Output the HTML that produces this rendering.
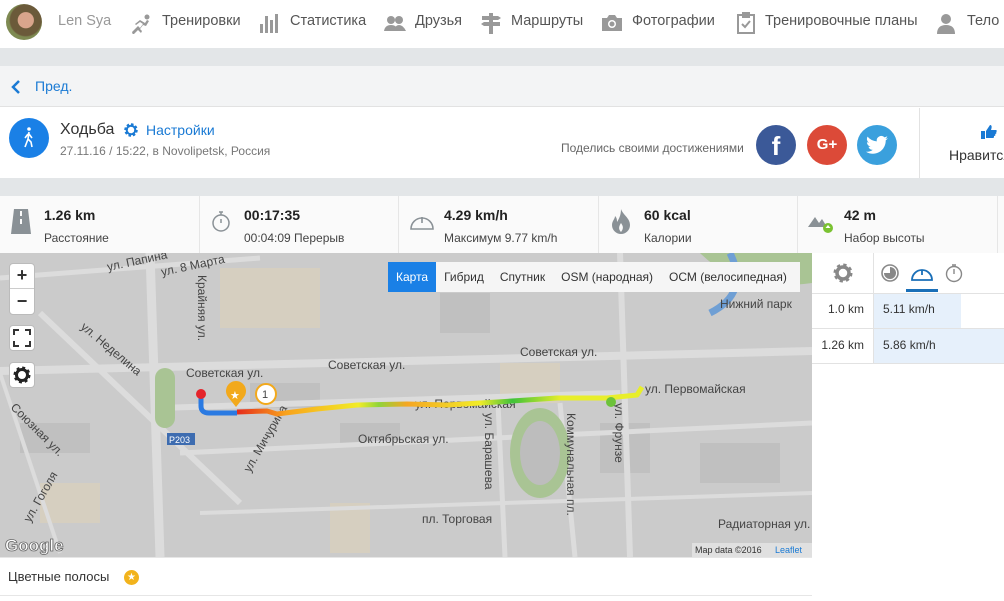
<!DOCTYPE html>
<html><head><meta charset="utf-8"><style>
*{margin:0;padding:0;box-sizing:border-box}
body{width:1004px;height:601px;overflow:hidden;font-family:"Liberation Sans",sans-serif;background:#fff;position:relative;color:#333}
.a{position:absolute}
.nav{font-size:14.5px;color:#555;top:13px}
.navi{top:12px;width:22px;height:22px}
.st b{font-size:14px;color:#222;display:block}
.st span{font-size:12px;color:#444;display:block;margin-top:8px}
</style></head><body>
<!-- top nav -->
<div class="a" style="left:6px;top:4px;width:36px;height:36px;border-radius:50%;background:radial-gradient(circle at 55% 45%,#d9a58c 0 28%,#6b5a3a 30% 55%,#7e8a52 60%)"></div>
<div class="a nav" style="left:58px;color:#999">Len Sya</div>
<svg class="a navi" style="left:130px" viewBox="0 0 22 22" fill="#999"><circle cx="17" cy="5" r="2.5"/><path d="M2 20l6-6 2 2 3-4-3-2-4 3-1-1 5-4 5 3 2-3 2 1-3 5-3-1-3 4 2 2-1 2-3-3-5 5z"/></svg>
<div class="a nav" style="left:162px">Тренировки</div>
<svg class="a navi" style="left:258px" viewBox="0 0 22 22" fill="#999"><rect x="2" y="12" width="3" height="9"/><rect x="7" y="4" width="3" height="17"/><rect x="12" y="8" width="3" height="13"/><rect x="17" y="2" width="3" height="19"/></svg>
<div class="a nav" style="left:290px">Статистика</div>
<svg class="a navi" style="left:384px" viewBox="0 0 22 22" fill="#999"><circle cx="7" cy="8" r="4"/><circle cx="15" cy="8" r="4"/><path d="M0 19q1-6 7-6t7 6zM10 19q1-6 5-6t7 6z"/></svg>
<div class="a nav" style="left:415px">Друзья</div>
<svg class="a navi" style="left:480px" viewBox="0 0 22 22" fill="#999"><rect x="9" y="1" width="4" height="21"/><path d="M2 4h16l3 2-3 2H2zM4 10h16v4H4l-3-2z"/></svg>
<div class="a nav" style="left:511px">Маршруты</div>
<svg class="a navi" style="left:601px" viewBox="0 0 22 22" fill="#999"><path d="M1 6h5l2-3h6l2 3h5v13H1z"/><circle cx="11" cy="12" r="4" fill="#fff"/><circle cx="11" cy="12" r="2.5"/></svg>
<div class="a nav" style="left:632px">Фотографии</div>
<svg class="a navi" style="left:735px" viewBox="0 0 22 22" fill="none" stroke="#999" stroke-width="2"><rect x="3" y="3" width="16" height="18"/><path d="M7 12l3 3 5-6"/><rect x="8" y="1" width="6" height="4" fill="#999"/></svg>
<div class="a nav" style="left:765px">Тренировочные планы</div>
<svg class="a navi" style="left:935px" viewBox="0 0 22 22" fill="#999"><circle cx="11" cy="7" r="5"/><path d="M2 22q0-9 9-9t9 9z"/></svg>
<div class="a nav" style="left:967px">Тело</div>
<!-- bands -->
<div class="a" style="top:48px;left:0;width:1004px;height:18px;background:#e3e6e8"></div>
<div class="a" style="top:66px;left:0;width:1004px;height:41px;background:#f3f4f5;border-bottom:1px solid #e2e2e2"></div>
<svg class="a" style="left:10px;top:79px" width="12" height="16" viewBox="0 0 12 16"><path d="M9 2L3 8l6 6" stroke="#1a7ad4" stroke-width="2.5" fill="none"/></svg>
<div class="a" style="left:35px;top:78px;font-size:14px;color:#1a7ad4">Пред.</div>
<!-- card -->
<div class="a" style="left:9px;top:118px;width:40px;height:40px;border-radius:50%;background:#1a80e6"></div>
<svg class="a" style="left:20px;top:126px" width="18" height="24" viewBox="0 0 18 24" fill="none" stroke="#fff" stroke-width="1.6"><circle cx="9" cy="3" r="1.8" fill="#fff" stroke="none"/><path d="M9 6l-1 7-3 8M8 13l3 3 1 5M9 8l3 4M8 8l-3 4"/></svg>
<div class="a" style="left:60px;top:121px;font-size:16px;color:#333">Ходьба</div>
<svg class="a" style="left:123px;top:122px" width="16" height="16" viewBox="0 0 16 16"><circle cx="8" cy="8" r="5" fill="none" stroke="#1a7ad4" stroke-width="3.5" stroke-dasharray="2.2 1.7"/><circle cx="8" cy="8" r="4.3" fill="none" stroke="#1a7ad4" stroke-width="2"/></svg>
<div class="a" style="left:146px;top:122px;font-size:14px;color:#1a7ad4">Настройки</div>
<div class="a" style="left:60px;top:144px;font-size:12px;color:#777">27.11.16 / 15:22, в Novolipetsk, Россия</div>
<div class="a" style="left:561px;top:141px;font-size:12px;color:#666">Поделись своими достижениями</div>
<div class="a" style="left:756px;top:125px;width:40px;height:40px;border-radius:50%;background:#3b5998;color:#fff;font-size:26px;font-weight:bold;text-align:center;line-height:42px">f</div>
<div class="a" style="left:807px;top:125px;width:40px;height:40px;border-radius:50%;background:#dc4a38;color:#fff;font-size:15px;font-weight:bold;text-align:center;line-height:40px">G+</div>
<div class="a" style="left:857px;top:125px;width:40px;height:40px;border-radius:50%;background:#3aa0dd"></div>
<svg class="a" style="left:866px;top:135px" width="22" height="20" viewBox="0 0 24 20" fill="#fff"><path d="M24 2.5a10 10 0 0 1-2.8.8A5 5 0 0 0 23.3.5a10 10 0 0 1-3.1 1.2A4.9 4.9 0 0 0 11.8 6 14 14 0 0 1 1.7.9a4.9 4.9 0 0 0 1.5 6.6A4.9 4.9 0 0 1 1 6.9a4.9 4.9 0 0 0 3.9 4.9 5 5 0 0 1-2.2.1 4.9 4.9 0 0 0 4.6 3.4A9.9 9.9 0 0 1 0 17.3 14 14 0 0 0 7.5 19.5c9 0 14-7.5 14-14v-.6A10 10 0 0 0 24 2.5z"/></svg>
<div class="a" style="left:919px;top:108px;width:1px;height:70px;background:#e2e2e2"></div>
<svg class="a" style="left:981px;top:125px" width="16" height="14" viewBox="0 0 16 14" fill="#1a7ad4"><rect x="0" y="6" width="4" height="8"/><path d="M5 6l4-6c2 0 2 2 1 5h5c1 0 1 2 0 2 1 1 0 2-1 2 1 1 0 2-1 2 0 1 0 2-1 2H5z"/></svg>
<div class="a" style="left:949px;top:147px;font-size:14px;color:#333">Нравится</div>
<div class="a" style="top:178px;left:0;width:1004px;height:18px;background:#e3e6e8"></div>
<!-- stats -->
<div class="a" style="top:196px;left:0;width:1004px;height:57px;background:#fafafa"></div>
<div class="a" style="left:199px;top:196px;width:1px;height:57px;background:#e6e6e6"></div>
<div class="a" style="left:398px;top:196px;width:1px;height:57px;background:#e6e6e6"></div>
<div class="a" style="left:598px;top:196px;width:1px;height:57px;background:#e6e6e6"></div>
<div class="a" style="left:797px;top:196px;width:1px;height:57px;background:#e6e6e6"></div>
<div class="a" style="left:997px;top:196px;width:1px;height:57px;background:#e6e6e6"></div>
<svg class="a" style="left:11px;top:209px" width="20" height="25" viewBox="0 0 20 25" fill="#8a9196"><path d="M3 0h14l3 25H0z"/><rect x="9" y="2" width="2" height="5" fill="#fafafa"/><rect x="9" y="10" width="2" height="5" fill="#fafafa"/></svg>
<div class="a st" style="left:44px;top:207px"><b>1.26 km</b><span>Расстояние</span></div>
<svg class="a" style="left:211px;top:211px" width="20" height="22" viewBox="0 0 20 22" fill="none" stroke="#8a9196" stroke-width="1.5"><circle cx="10" cy="12" r="8"/><path d="M10 1v3M8 1h4M10 8v4"/></svg>
<div class="a st" style="left:244px;top:207px"><b>00:17:35</b><span>00:04:09 Перерыв</span></div>
<svg class="a" style="left:409px;top:211px" width="26" height="20" viewBox="0 0 26 20" fill="none" stroke="#8a9196" stroke-width="1.6"><path d="M2 18a11 11 0 1 1 22 0z"/><path d="M13 6v6"/></svg>
<div class="a st" style="left:444px;top:207px"><b>4.29 km/h</b><span>Максимум 9.77 km/h</span></div>
<svg class="a" style="left:612px;top:209px" width="18" height="25" viewBox="0 0 18 25" fill="#8a9196"><path d="M9 0c2 6 9 9 9 16a9 9 0 0 1-18 0c0-4 3-6 3-9 2 2 2 4 2 6 2-3 4-7 4-13z"/><path d="M9 14c2 3 3 5 0 9-3-3-2-6 0-9z" fill="#fafafa"/></svg>
<div class="a st" style="left:644px;top:207px"><b>60 kcal</b><span>Калории</span></div>
<svg class="a" style="left:808px;top:212px" width="26" height="22" viewBox="0 0 26 22" fill="#8a9196"><path d="M0 15l7-10 4 6 3-4 5 8z"/><circle cx="20" cy="16" r="5" fill="#7ac231"/><path d="M20 13l-2.5 3h5z" fill="#fff"/></svg>
<div class="a st" style="left:844px;top:207px"><b>42 m</b><span>Набор высоты</span></div>
<!-- map -->
<svg class="a" style="left:0;top:253px" width="812" height="304" viewBox="0 0 812 304">
<rect width="812" height="304" fill="#cbcbcb"/>
<g fill="#d6cfc0"><rect x="220" y="15" width="100" height="60"/><rect x="500" y="110" width="60" height="40"/><rect x="330" y="250" width="40" height="50"/><rect x="40" y="230" width="60" height="40"/></g>
<g fill="#c0c0c0"><rect x="250" y="130" width="70" height="25"/><rect x="340" y="170" width="60" height="20"/><rect x="600" y="170" width="50" height="50"/><rect x="700" y="190" width="80" height="40"/><rect x="20" y="170" width="70" height="30"/><rect x="440" y="40" width="50" height="40"/></g>
<g stroke="#dcdcdc" fill="none"><path d="M0 118L812 98" stroke-width="8"/><path d="M160 155L620 140" stroke-width="6"/><path d="M150 0L160 304" stroke-width="9"/><path d="M620 0L630 304" stroke-width="6"/><path d="M0 25L260 5" stroke-width="5"/><path d="M40 60L240 250" stroke-width="6"/><path d="M180 200L812 170" stroke-width="5"/><path d="M200 260L812 240" stroke-width="4"/><path d="M498 150L505 304" stroke-width="5"/><path d="M560 150L575 304" stroke-width="5"/><path d="M0 120L60 300" stroke-width="4"/></g>
<rect x="155" y="115" width="20" height="60" rx="10" fill="#a9c494"/>
<ellipse cx="540" cy="200" rx="30" ry="45" fill="#a9c494"/><ellipse cx="540" cy="200" rx="20" ry="32" fill="#bdbdbd"/>
<path d="M700 0q40 40 112 30V0z" fill="#a9c494"/><path d="M730 0q20 40 -20 60" stroke="#6f9fd4" stroke-width="7" fill="none"/>
<rect x="167" y="180" width="28" height="12" fill="#3d6cb0"/><text x="169" y="190" font-size="9" fill="#fff" font-family="Liberation Sans">P203</text>
<g font-family="Liberation Sans" font-size="12" fill="#444">
<text x="520" y="103">Советская ул.</text><text x="328" y="116">Советская ул.</text><text x="186" y="124">Советская ул.</text>
<text x="645" y="140">ул. Первомайская</text><text x="415" y="155">ул. Первомайская</text>
<text x="108" y="18" transform="rotate(-12 108 18)">ул. Папина</text><text x="162" y="23" transform="rotate(-12 162 23)">ул. 8 Марта</text>
<text x="80" y="75" transform="rotate(40 80 75)">ул. Неделина</text><text x="358" y="190">Октябрьская ул.</text>
<text x="422" y="270">пл. Торговая</text><text x="718" y="275">Радиаторная ул.</text><text x="720" y="55">Нижний парк</text>
<text x="10" y="155" transform="rotate(45 10 155)">Союзная ул.</text><text x="30" y="270" transform="rotate(-60 30 270)">ул. Гоголя</text>
<text x="198" y="22" transform="rotate(90 198 22)">Крайняя ул.</text><text x="485" y="160" transform="rotate(90 485 160)">ул. Барашева</text>
<text x="567" y="160" transform="rotate(90 567 160)">Коммунальная пл.</text><text x="615" y="150" transform="rotate(90 615 150)">ул. Фрунзе</text>
<text x="250" y="220" transform="rotate(-60 250 220)">ул. Мичурина</text>
</g>
<defs><linearGradient id="g" x1="0" x2="1"><stop offset="0" stop-color="#e52b1c"/><stop offset=".12" stop-color="#f9a21c"/><stop offset=".3" stop-color="#f1ec28"/><stop offset=".35" stop-color="#8fd43a"/><stop offset=".42" stop-color="#f5a623"/><stop offset=".6" stop-color="#f1ec28"/><stop offset=".68" stop-color="#3fc23a"/><stop offset=".8" stop-color="#e8ee2a"/><stop offset="1" stop-color="#e8ee2a"/></linearGradient></defs>
<path d="M201 141v12q0 7 8 7h28" stroke="#2a7ae2" stroke-width="5" fill="none"/>
<path d="M237 159l30 -1 10 3 40 -5 40 -4 50 -1 40 1 50 -3 60 -4 50 0 30 -3 5 -8" stroke="url(#g)" stroke-width="5" fill="none" stroke-linejoin="round"/>
<circle cx="201" cy="141" r="5" fill="#e5242b"/><circle cx="611" cy="149" r="5" fill="#6cc23a"/>
<path d="M236 154l-8-10a10 10 0 1 1 16 0z" fill="#f2a91c"/><text x="230" y="146" font-size="11" fill="#fff">★</text>
<circle cx="266" cy="141" r="10" fill="#fff" stroke="#f2a91c" stroke-width="2"/><text x="262" y="145" font-size="11" fill="#444" font-family="Liberation Sans">1</text>
<text x="5" y="298" font-size="17" font-weight="bold" fill="#fff" stroke="#666" stroke-width=".8" font-family="Liberation Sans">Google</text>
<rect x="692" y="290" width="120" height="14" fill="#e0e0e0"/><text x="695" y="300" font-size="9" fill="#333" font-family="Liberation Sans">Map data ©2016</text><text x="775" y="300" font-size="9" fill="#1a7ad4" font-family="Liberation Sans">Leaflet</text>
</svg>
<!-- map controls -->
<div class="a" style="left:9px;top:263px;width:26px;height:52px;background:#fff;border-radius:4px;border:1px solid #bbb"></div>
<div class="a" style="left:10px;top:288px;width:24px;height:1px;background:#ccc"></div>
<div class="a" style="left:9px;top:263px;width:26px;text-align:center;font-size:18px;font-weight:bold;line-height:25px">+</div>
<div class="a" style="left:9px;top:289px;width:26px;text-align:center;font-size:18px;font-weight:bold;line-height:25px">−</div>
<div class="a" style="left:9px;top:325px;width:26px;height:26px;background:#fff;border-radius:4px;border:1px solid #bbb"></div>
<svg class="a" style="left:13px;top:329px" width="18" height="18" viewBox="0 0 18 18" fill="none" stroke="#333" stroke-width="2"><path d="M1 6V1h5M12 1h5v5M17 12v5h-5M6 17H1v-5"/></svg>
<div class="a" style="left:9px;top:362px;width:26px;height:26px;background:#fff;border-radius:4px;border:1px solid #bbb"></div>
<svg class="a" style="left:12px;top:365px" width="20" height="20" viewBox="0 0 20 20"><circle cx="10" cy="10" r="6.5" fill="none" stroke="#222" stroke-width="4" stroke-dasharray="2.6 2.5"/><circle cx="10" cy="10" r="5.5" fill="none" stroke="#222" stroke-width="3"/></svg>
<div class="a" style="left:388px;top:262px;width:412px;height:30px;background:#f5f5f5;font-size:12px;color:#333;display:flex;align-items:center;font-family:'Liberation Sans Narrow','Liberation Sans',sans-serif">
<span style="background:#1a80e6;color:#fff;height:30px;line-height:30px;padding:0 8px">Карта</span><span style="padding:0 8px">Гибрид</span><span style="padding:0 8px">Спутник</span><span style="padding:0 8px">OSM (народная)</span><span style="padding:0 8px">ОСМ (велосипедная)</span></div>
<!-- right panel -->
<div class="a" style="left:812px;top:253px;width:192px;height:304px;background:#fff"></div>
<div class="a" style="left:873px;top:253px;width:1px;height:110px;background:#e2e2e2"></div>
<svg class="a" style="left:832px;top:262px" width="22" height="22" viewBox="0 0 22 22"><circle cx="11" cy="11" r="7" fill="none" stroke="#888" stroke-width="5" stroke-dasharray="2.8 2.7"/><circle cx="11" cy="11" r="6" fill="none" stroke="#888" stroke-width="3.5"/></svg>
<svg class="a" style="left:880px;top:263px" width="20" height="20" viewBox="0 0 20 20"><circle cx="10" cy="10" r="8" fill="none" stroke="#888" stroke-width="1.6"/><path d="M10 4a6 6 0 1 1-6 6h6z" fill="#888"/></svg>
<svg class="a" style="left:910px;top:263px" width="24" height="20" viewBox="0 0 24 20" fill="none" stroke="#1a6fb8" stroke-width="1.8"><path d="M2 17a10 10 0 1 1 20 0z"/><path d="M12 7v5"/></svg>
<div class="a" style="left:906px;top:289px;width:32px;height:3px;background:#1a6fb8"></div>
<svg class="a" style="left:944px;top:263px" width="20" height="20" viewBox="0 0 20 20" fill="none" stroke="#888" stroke-width="1.4"><circle cx="10" cy="11" r="7.5"/><path d="M10 6v5M8 2h4"/></svg>
<div class="a" style="left:812px;top:293px;width:192px;height:1px;background:#e2e2e2"></div>
<div class="a" style="left:874px;top:294px;width:87px;height:34px;background:#e6f0fb"></div>
<div class="a" style="left:812px;top:328px;width:192px;height:1px;background:#e2e2e2"></div>
<div class="a" style="left:874px;top:329px;width:130px;height:34px;background:#e6f0fb"></div>
<div class="a" style="left:812px;top:363px;width:192px;height:1px;background:#e2e2e2"></div>
<div class="a" style="left:812px;top:302px;width:52px;text-align:right;font-size:12px;color:#333">1.0 km</div>
<div class="a" style="left:883px;top:302px;font-size:12px;color:#333">5.11 km/h</div>
<div class="a" style="left:812px;top:338px;width:52px;text-align:right;font-size:12px;color:#333">1.26 km</div>
<div class="a" style="left:883px;top:338px;font-size:12px;color:#333">5.86 km/h</div>
<!-- bottom -->
<div class="a" style="left:0;top:557px;width:812px;height:1px;background:#e6e6e6"></div>
<div class="a" style="left:8px;top:569px;font-size:13px;color:#333">Цветные полосы</div>
<div class="a" style="left:124px;top:570px;width:15px;height:15px;border-radius:50%;background:#f2b31c;color:#fff;font-size:10px;text-align:center;line-height:15px">★</div>
<div class="a" style="left:0;top:595px;width:812px;height:1px;background:#e6e6e6"></div>
</body></html>
